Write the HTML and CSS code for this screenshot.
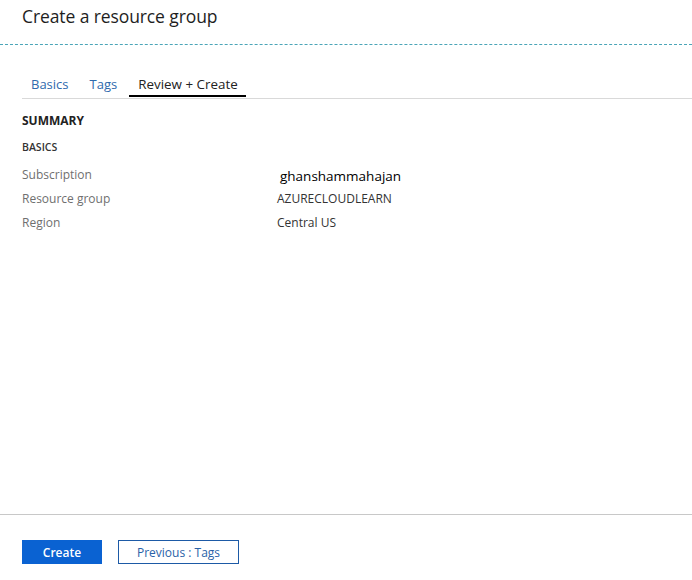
FILE: index.html
```html
<!DOCTYPE html>
<html lang="en">
<head>
<meta charset="utf-8">
<title>Create a resource group</title>
<link rel="stylesheet" href="styles.css">
</head>
<body>
<div class="page">
  <header class="header">
    <h1 class="title">Create a resource group</h1>
  </header>
  <main class="main">
    <nav class="tabs">
      <span class="tab">Basics</span>
      <span class="tab">Tags</span>
      <span class="tab active">Review + Create</span>
    </nav>
    <section class="summary">
      <h2 class="summary-title">SUMMARY</h2>
      <h3 class="section-title">BASICS</h3>
      <div class="rows">
        <div class="row"><span class="label">Subscription</span><span class="value sub">ghanshammahajan</span></div>
        <div class="row"><span class="label">Resource group</span><span class="value">AZURECLOUDLEARN</span></div>
        <div class="row"><span class="label">Region</span><span class="value">Central US</span></div>
      </div>
    </section>
  </main>
  <footer class="footer">
    <button class="btn primary">Create</button>
    <button class="btn secondary">Previous : Tags</button>
  </footer>
</div>
</body>
</html>
```
FILE: styles.css
```css
* { box-sizing: border-box; }
html, body { margin: 0; padding: 0; background: #fff; }
body { font-family: "Open Sans", "Noto Sans", sans-serif; color: #222; }
.page { display: flex; flex-direction: column; height: 580px; }
.header {
  height: 45px;
  padding: 4px 22px 0;
  border-bottom: 1px dashed #4aa5b8;
}
.title { margin: 0; font-size: 17.5px; font-weight: 400; color: #1e1e1e; line-height: 24px; letter-spacing: -0.1px; }
.main { flex: 1; padding: 28px 0 0 22px; }
.tabs {
  display: flex;
  gap: 3px;
  border-bottom: 1px solid #d9d9d9;
  padding-bottom: 1px;
}
.tab {
  padding: 0 9px;
  font-size: 13px;
  line-height: 22px;
  height: 24px;
  color: #2f6aad;
  border-bottom: 2px solid transparent;
}
.tab.active { color: #222; border-bottom-color: #000; font-size: 13.4px; padding: 0 8px 0 9px; }
.summary { padding-top: 14px; }
.summary-title { margin: 0; font-size: 12px; font-weight: 700; line-height: 16px; color: #222; }
.section-title { margin: 10px 0 0; font-size: 10.5px; font-weight: 600; line-height: 16px; color: #333; }
.rows { display: flex; flex-direction: column; margin-top: 7px; }
.row { display: flex; height: 24px; align-items: center; font-size: 12px; }
.label { width: 255px; color: #6f6f6f; }
.value { color: #333; }
.value.sub { font-size: 13.5px; color: #000; padding-left: 3px; margin-top: 4px; }
.footer {
  height: 66px;
  border-top: 1px solid #c8c8c8;
  display: flex;
  align-items: flex-start;
  gap: 16px;
  padding: 25px 22px 0;
}
.btn {
  height: 24px;
  font-family: inherit;
  font-size: 12px;
  font-weight: 600;
  padding: 0;
  cursor: pointer;
}
.btn.primary { width: 80px; background: #0a62d2; color: #fff; border: none; }
.btn.secondary { width: 121px; background: #fff; color: #2a62a8; border: 1px solid #1d5aa6; font-weight: 500; }
```
